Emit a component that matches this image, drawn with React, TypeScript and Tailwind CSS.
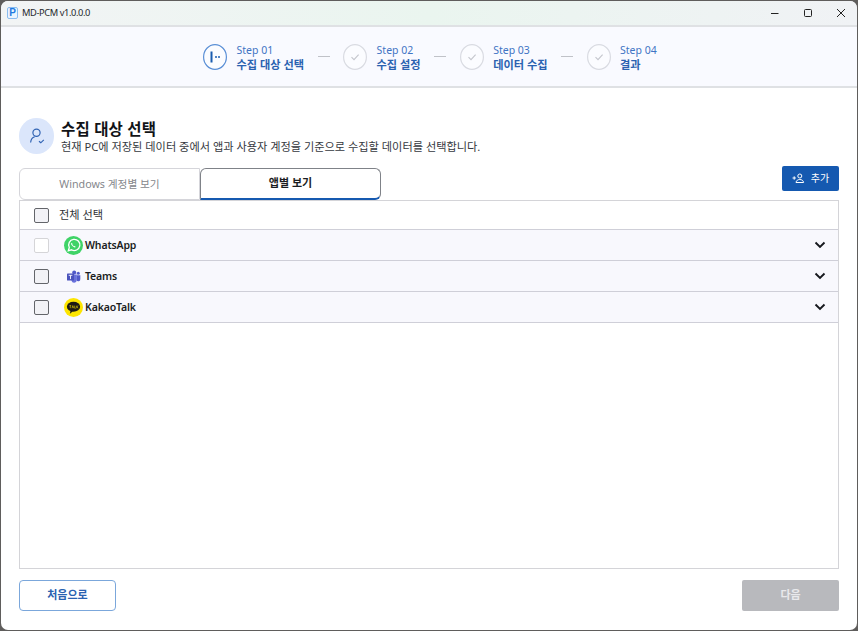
import React from "react";

function StepIcon() {
  return (
    <svg width="24" height="26" viewBox="0 0 24 26" fill="none" className="shrink-0">
      <ellipse cx="12" cy="13" rx="11.4" ry="12.4" fill="#fbfcff" stroke="#d9dbe2" strokeWidth="1.2" />
      <path d="M8.5 13.2l2.5 2.4 4.6-5" stroke="#c4c6cd" strokeWidth="1.1" fill="none" />
    </svg>
  );
}

function Step({ n, label, first }: { n: string; label: string; first?: boolean }) {
  return (
    <div className="flex items-center gap-[9.5px]">
      {first ? (
        <svg width="24" height="26" viewBox="0 0 24 26" fill="none" className="shrink-0">
          <ellipse cx="12" cy="13" rx="11.4" ry="12.4" fill="#fbfcff" stroke="#5a8fd6" strokeWidth="1.2" />
          <rect x="7.5" y="7.5" width="2" height="11" fill="#1a5cb0" />
          <circle cx="13" cy="13" r="1" fill="#1a5cb0" />
          <circle cx="16" cy="13" r="1" fill="#1a5cb0" />
        </svg>
      ) : (
        <StepIcon />
      )}
      <div className="flex flex-col pt-[2px]">
        <span className="text-[10.5px] leading-[14px] text-[#3f74c4]">Step {n}</span>
        <span className="text-[11.2px] leading-[15px] font-semibold text-[#2a62b0] whitespace-nowrap">{label}</span>
      </div>
    </div>
  );
}

function Dash() {
  return <div className="w-3 mx-[13.5px] border-t border-[#c0c2c8]" />;
}

function Check({ light }: { light?: boolean }) {
  return (
    <div
      className={
        light
          ? "w-[15px] h-[15px] rounded-[2px] border border-[#d5d5d8] bg-white"
          : "w-[15px] h-[15px] rounded-[2px] border border-[#63656a] bg-[#f2f2f6]"
      }
    />
  );
}

function Chevron() {
  return (
    <svg width="12" height="8" viewBox="0 0 12 8" fill="none">
      <path d="M1.5 1.5L6 6l4.5-4.5" stroke="#16181d" strokeWidth="1.9" />
    </svg>
  );
}

function WhatsApp() {
  return (
    <svg width="19" height="19" viewBox="0 0 19 19" fill="none">
      <circle cx="9.5" cy="9.5" r="9.5" fill="#3fd367" />
      <path d="M4.3 14.8l1-3.3a5.6 5.6 0 1 1 2.2 2.3z" stroke="#fff" strokeWidth="1.3" fill="none" />
      <path d="M7.5 6.8c-.8.8-.4 2 .9 3.3s2.6 1.7 3.4.9l-1.1-1.1-.8.4-1.6-1.6.4-.8z" fill="#fff" />
    </svg>
  );
}

function TeamsLogo() {
  return (
    <svg width="19" height="19" viewBox="0 0 19 19" fill="none">
      <circle cx="9.5" cy="9.5" r="9.5" fill="#f8f8fe" />
      <circle cx="10.2" cy="5.4" r="2" fill="#5059c9" />
      <circle cx="14.3" cy="6.2" r="1.5" fill="#5059c9" />
      <path d="M12.5 8.2h3.8v3.8a2 2 0 0 1-3.8 1.1z" fill="#5059c9" />
      <path d="M7.5 7.6h5.3v5.6a2.7 2.7 0 0 1-5.3.5z" fill="#6a72dc" />
      <rect x="3" y="6.6" width="7" height="7" rx=".6" fill="#4b53bc" />
      <path d="M4.7 8.3h3.6M6.5 8.3v3.8" stroke="#fff" strokeWidth=".9" />
    </svg>
  );
}

function Kakao() {
  return (
    <svg width="19" height="19" viewBox="0 0 19 19" fill="none">
      <circle cx="9.5" cy="9.5" r="9.5" fill="#fde500" />
      <ellipse cx="9.5" cy="8.8" rx="6.6" ry="5" fill="#1d1a14" />
      <path d="M6.5 12.5l-.6 3.2 3-2.4z" fill="#1d1a14" />
      <path d="M5.4 7.6h1.8M6.3 7.6v2.6M8 10.2l.8-2.6.8 2.6M10.7 7.6v2.6h1.1M12.8 7.6v2.6M14 7.6l-1.2 1.3 1.2 1.3" stroke="#fde500" strokeWidth=".55" />
    </svg>
  );
}

function Row({ name, icon, light }: { name: string; icon: React.ReactNode; light?: boolean }) {
  return (
    <div className="flex items-center h-[31px] bg-[#f8f8fd] border-b border-[#cfcfd8] pl-[14px] pr-[12px]">
      <Check light={light} />
      <div className="w-[19px] ml-[15px] flex justify-center">{icon}</div>
      <span className="ml-[2px] mt-[1px] text-[10.5px] font-semibold tracking-[-0.15px] text-[#1b1d22]">{name}</span>
      <div className="ml-auto flex">
        <Chevron />
      </div>
    </div>
  );
}

export default function App() {
  return (
    <div
      className="w-[858px] h-[631px] overflow-hidden bg-[#5f5d5c]"
      style={{ fontFamily: '"Noto Sans", "Noto Sans CJK KR", sans-serif' }}
    >
      <div className="ml-[1px] mr-[1px] mt-[1px] h-[629px] bg-white rounded-[7px] overflow-hidden flex flex-col">
        <div className="h-[24px] shrink-0 flex items-center bg-gradient-to-r from-[#f2f4f5] via-[#eaf5ef] to-[#f0f2f5]">
          <div className="ml-[6px] w-[11px] h-[12px] rounded-[2px] border border-[#8abcf0] bg-[#eaf4ff] flex items-center justify-center text-[10px] leading-none font-bold text-[#1f7ae0]" style={{ fontFamily: '"Liberation Sans", sans-serif' }}>
            P
          </div>
          <span className="ml-[4px] text-[9.3px] tracking-[-0.4px] text-[#25282c]">MD-PCM v1.0.0.0</span>
          <div className="ml-auto flex items-center">
            <div className="w-[32px] flex justify-center">
              <svg width="10" height="10" viewBox="0 0 10 10"><path d="M1 5.5h7.5" stroke="#222" strokeWidth="1" /></svg>
            </div>
            <div className="w-[34px] flex justify-center">
              <svg width="10" height="10" viewBox="0 0 10 10" fill="none"><rect x="1.5" y="1.5" width="7" height="7" rx="1" stroke="#222" strokeWidth="1" /></svg>
            </div>
            <div className="w-[32px] flex justify-center">
              <svg width="10" height="10" viewBox="0 0 10 10" fill="none"><path d="M1 1l8 8M9 1l-8 8" stroke="#222" strokeWidth="1" /></svg>
            </div>
          </div>
        </div>
        <div className="h-[63px] shrink-0 bg-[#f9faff] border-t-2 border-b-2 border-[#dfe1e4] flex items-center pl-[202px]">
          <Step n="01" label="수집 대상 선택" first />
          <Dash />
          <Step n="02" label="수집 설정" />
          <Dash />
          <Step n="03" label="데이터 수집" />
          <Dash />
          <Step n="04" label="결과" />
        </div>
        <div className="flex-1 flex flex-col px-[18px] pb-[19px] min-h-0">
          <div className="flex items-center mt-[30px] gap-[7px]">
            <div className="w-[35px] h-[36px] rounded-full bg-[#dbe6fb] flex items-center justify-center">
              <svg width="18" height="18" viewBox="0 0 18 18" fill="none" stroke="#3164b4" strokeWidth="1.2">
                <circle cx="8.5" cy="5.8" r="3.6" />
                <path d="M2.6 15.5c.4-3.2 2-5.2 4-5.6" />
                <path d="M11 14.2l1.8 1.6 3-3" />
              </svg>
            </div>
            <div className="flex flex-col">
              <span className="text-[15.5px] leading-[20px] font-bold text-[#111317] tracking-[0.2px]">수집 대상 선택</span>
              <span className="text-[11.2px] leading-[15px] text-[#35383e]">현재 PC에 저장된 데이터 중에서 앱과 사용자 계정을 기준으로 수집할 데이터를 선택합니다.</span>
            </div>
          </div>
          <div className="flex items-end justify-between mt-[12px]">
            <div className="flex h-[32px]">
              <div className="w-[181px] rounded-tl-[6px] rounded-bl-[6px] bg-white border border-[#d5d5da] flex items-center justify-center text-[10.7px] text-[#85878c]">
                Windows 계정별 보기
              </div>
              <div className="w-[181px] rounded-t-[6px] rounded-br-[6px] bg-white border border-[#7f8288] border-b-2 border-b-[#1559b0] flex items-center justify-center text-[11px] font-bold text-[#1b1d22]">
                앱별 보기
              </div>
            </div>
            <div className="w-[57px] h-[25px] mb-[9px] rounded-[2px] bg-[#1559b0] flex items-center justify-center gap-[6px] text-[10px] text-white">
              <svg width="13" height="11" viewBox="0 0 13 11" fill="none" stroke="#fff" strokeWidth="1">
                <circle cx="7.8" cy="3" r="2" />
                <path d="M4 9.5c.3-2 1.8-3 3.8-3s3.5 1 3.8 3zM.5 5h3.4M2.2 3.3v3.4" />
              </svg>
              추가
            </div>
          </div>
          <div className="flex-1 border border-[#d4d4d8] bg-white flex flex-col min-h-0">
            <div className="flex items-center h-[29px] border-b border-[#cfcfd8] pl-[14px]">
              <Check />
              <span className="ml-[10px] text-[11.2px] text-[#2f3136]">전체 선택</span>
            </div>
            <Row name="WhatsApp" icon={<WhatsApp />} light />
            <Row name="Teams" icon={<TeamsLogo />} />
            <Row name="KakaoTalk" icon={<Kakao />} />
          </div>
          <div className="flex justify-between mt-[11px] shrink-0">
            <div className="w-[97px] h-[31px] rounded-[4px] border-[1.5px] border-[#7ba7db] bg-white flex items-center justify-center text-[11px] font-bold text-[#2a62b0]">
              처음으로
            </div>
            <div className="w-[97px] h-[31px] rounded-[2px] bg-[#b8b9bd] flex items-center justify-center text-[11px] font-bold text-[#e9e9ec]">
              다음
            </div>
          </div>
        </div>
      </div>
    </div>
  );
}
